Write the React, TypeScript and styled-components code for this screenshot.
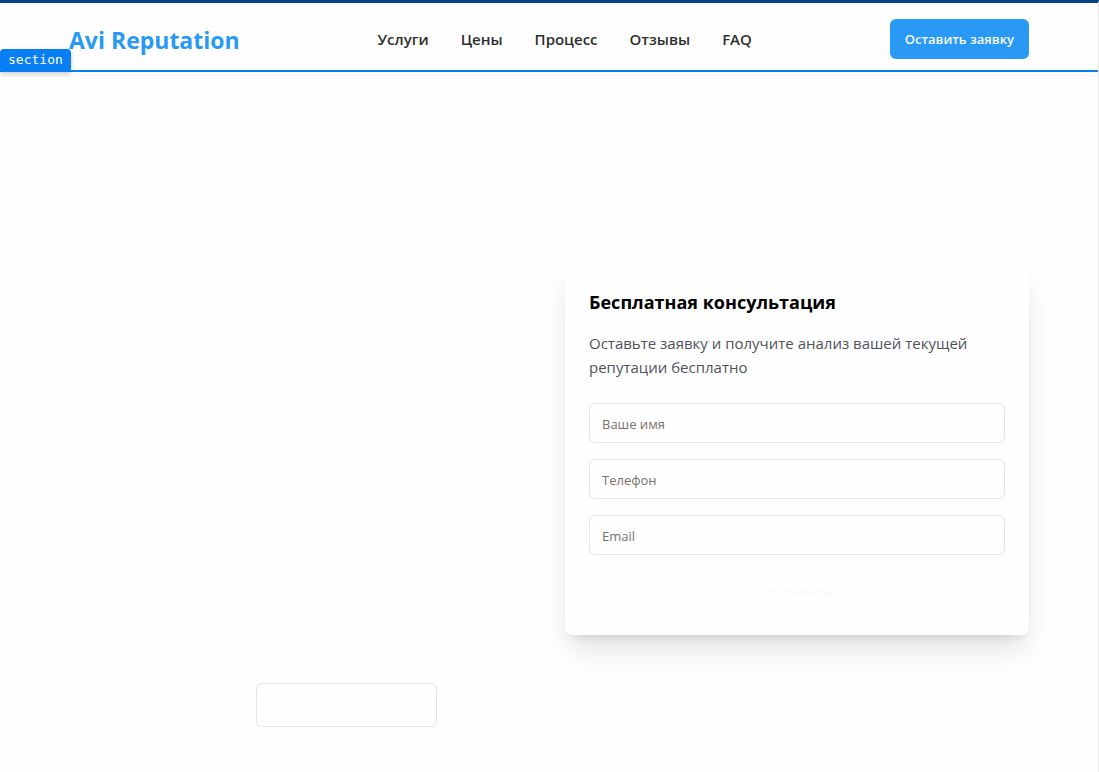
import React from "react";
import styled, { createGlobalStyle } from "styled-components";

const GlobalStyle = createGlobalStyle`
  *, *::before, *::after { box-sizing: border-box; }
  body {
    margin: 0;
    background: #fefefe;
    color: #000;
    font-family: "Segoe UI", "Open Sans", "Noto Sans", sans-serif;
    font-size: 15px;
    line-height: 24px;
  }
  h2, p { margin: 0; }
  button, input { font: inherit; }
`;

const Page = styled.div`
  min-height: 100vh;
  overflow: hidden;
  border-top: 3px solid #004386;
  border-right: 1px solid #ececec;
`;

const Container = styled.div`
  width: 100%;
  max-width: 1024px;
  margin: 0 auto;
  padding: 0 32px;
`;

const Header = styled.header`
  position: relative;
  border-bottom: 1px solid #f6f6f6;
`;

const HeaderRow = styled(Container)`
  display: flex;
  align-items: center;
  justify-content: space-between;
  padding-top: 16px;
  padding-bottom: 16px;
`;

const Brand = styled.a`
  color: #2899f5;
  font-size: 23px;
  font-weight: 700;
  line-height: 32px;
  text-decoration: none;
  padding-top: 2px;
`;

const Nav = styled.nav`
  display: flex;
  gap: 32px;
`;

const NavLink = styled.a`
  color: #2e2e2e;
  font-weight: 600;
  text-decoration: none;
`;

const Button = styled.button<{ $variant: "primary" | "ghost" | "outline" }>`
  height: ${(p) => (p.$variant === "outline" ? 44 : 40)}px;
  padding: 0 ${(p) => (p.$variant === "primary" ? 14 : 16)}px;
  border: 1px solid ${(p) => (p.$variant === "outline" ? "#e4e4e4" : "transparent")};
  border-radius: 6px;
  background: ${(p) => (p.$variant === "primary" ? "#2899f5" : "transparent")};
  color: ${(p) => (p.$variant === "primary" ? "#f8fafc" : "#fafafd")};
  font-size: 13px;
  font-weight: 600;
  line-height: 20px;
  cursor: pointer;
`;

const InspectorLine = styled.div`
  position: absolute;
  left: 0;
  right: 0;
  top: 67px;
  height: 2px;
  background: #087ff5;
  pointer-events: none;
`;

const InspectorTag = styled.span`
  position: absolute;
  left: 0;
  bottom: 0;
  padding: 0 8px 2px;
  border-radius: 4px;
  background: #087ff5;
  box-shadow: 0 2px 4px rgba(0, 0, 0, 0.2);
  color: #fff;
  font-family: "DejaVu Sans Mono", monospace;
  font-size: 13px;
  line-height: 21px;
`;

const Hero = styled(Container).attrs({ as: "section" })`
  display: grid;
  grid-template-columns: 1fr 1fr;
  gap: 32px;
  align-items: center;
  padding-top: 95px;
  padding-bottom: 44px;
`;

const Intro = styled.div`
  display: grid;
  grid-template-columns: 171px 181px;
  gap: 16px;
  align-items: end;
  min-height: 556px;

  > button { grid-column: 2; }
`;

const Card = styled.form`
  padding: 24px;
  border-radius: 8px;
  background: #fefefe;
  box-shadow: 0 18px 30px -5px rgba(0, 0, 0, 0.12), 0 8px 10px -6px rgba(0, 0, 0, 0.1);
  display: flex;
  flex-direction: column;
  gap: 16px;
`;

const CardTitle = styled.h2`
  padding-top: 2px;
  font-size: 18px;
  font-weight: 700;
  line-height: 26px;
`;

const CardText = styled.p`
  color: #52525b;
  padding-bottom: 8px;
`;

const Field = styled.input`
  width: 100%;
  height: 40px;
  padding: 2px 12px 0;
  border: 1px solid #e4e4e4;
  border-radius: 6px;
  background: transparent;
  font-size: 13px;
  line-height: 20px;

  &::placeholder { color: #78716c; opacity: 1; }
`;

const links = ["Услуги", "Цены", "Процесс", "Отзывы", "FAQ"];
const fields = [
  { label: "Ваше имя", type: "text" },
  { label: "Телефон", type: "tel" },
  { label: "Email", type: "email" },
];

export default function App() {
  return (
    <>
      <GlobalStyle />
      <Page>
        <Header>
          <HeaderRow>
            <Brand href="#">Avi Reputation</Brand>
            <Nav>
              {links.map((link) => (
                <NavLink key={link} href="#">{link}</NavLink>
              ))}
            </Nav>
            <Button type="button" $variant="primary">Оставить заявку</Button>
          </HeaderRow>
          <InspectorLine>
            <InspectorTag>section</InspectorTag>
          </InspectorLine>
        </Header>
        <Hero>
          <Intro>
            <Button type="button" $variant="outline" />
          </Intro>
          <Card>
            <CardTitle>Бесплатная консультация</CardTitle>
            <CardText>Оставьте заявку и получите анализ вашей текущей репутации бесплатно</CardText>
            {fields.map((f) => (
              <Field key={f.label} type={f.type} placeholder={f.label} aria-label={f.label} />
            ))}
            <Button type="submit" $variant="ghost">Отправить</Button>
          </Card>
        </Hero>
      </Page>
    </>
  );
}
